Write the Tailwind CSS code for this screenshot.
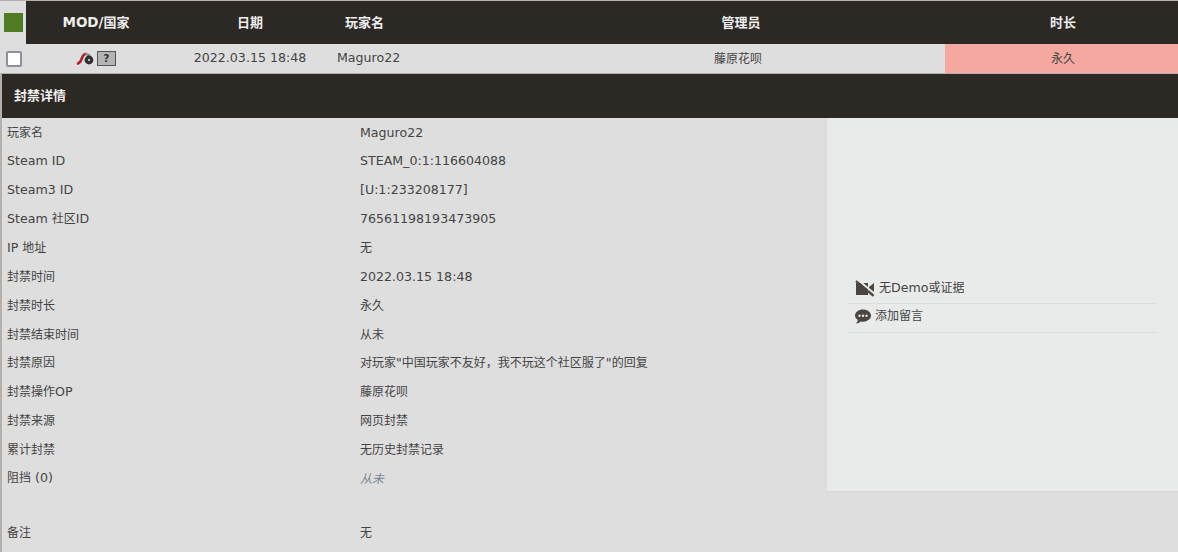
<!DOCTYPE html>
<html lang="zh">
<head>
    <meta charset="UTF-8">
    <title>封禁详情</title>
    <script src="https://cdn.jsdelivr.net/npm/@tailwindcss/browser@4"></script>
</head>
<body class="bg-[#dedede] overflow-hidden">
<div class="w-[1178px] h-[552px] overflow-hidden border-t border-[#b5b0ab] text-[12px] text-[#444] font-['DejaVu_Sans','Noto_Sans_CJK_SC',sans-serif]">
    <!-- Table header -->
    <div class="flex h-[43px] items-center font-bold text-[13px] text-[#eee]">
        <div class="w-[26px] h-full flex items-center pl-[4px] bg-[#dedede]">
            <div class="w-[19px] h-[19px] bg-[#4f7d23]"></div>
        </div>
        <div class="flex-1 h-full flex items-center bg-[#2c2824]">
            <div class="w-[140px] text-center"><span class="text-[13.5px]">MOD/</span>国家</div>
            <div class="w-[168px] text-center">日期</div>
            <div class="w-[197px] pl-[11px]">玩家名</div>
            <div class="w-[414px] pl-[6px] text-center">管理员</div>
            <div class="w-[233px] pl-[3px] text-center">时长</div>
        </div>
    </div>
    <!-- Ban row -->
    <div class="flex h-[30px] items-center border-b border-[#b5b0ab]">
        <div class="w-[26px] pl-[6px] flex items-center">
            <div class="w-[16px] h-[16px] rounded-[2px] border-2 border-[#8f8f9d] bg-white"></div>
        </div>
        <div class="w-[140px] flex items-center justify-center gap-[3px]">
            <svg width="18" height="13" viewBox="0 0 18 13">
                <path d="M1 12 C4 11 5 9 6 6 C7 3 8 2 10 2" fill="none" stroke="#b3232a" stroke-width="2.6"/>
                <path d="M9 1.5 L14 3.5" stroke="#888" stroke-width="2.4"/>
                <circle cx="13" cy="8" r="4.4" fill="#2f2f2f"/>
                <circle cx="13" cy="8" r="1.2" fill="#bbb"/>
            </svg>
            <div class="w-[19px] h-[15px] border border-[#555] bg-[#b4b4b4] flex items-center justify-center text-[10px] font-bold leading-none text-[#333]">?</div>
        </div>
        <div class="w-[168px] text-center text-[12.6px]">2022.03.15 18:48</div>
        <div class="w-[197px] pl-[3px] text-[12.6px]">Maguro22</div>
        <div class="w-[414px] text-center">藤原花呗</div>
        <div class="w-[233px] h-full pl-[3px] flex items-center justify-center bg-[#f4a89f]">永久</div>
    </div>
    <!-- Ban details -->
    <div class="ml-[2px]">
        <div class="h-[44px] flex items-center pl-[12px] bg-[#2c2824] font-bold text-[13px] text-[#eee]">封禁详情</div>
        <div class="flex items-start">
            <div class="w-[824px] pt-[0.6px]">
                <div class="flex h-[28.8px] items-center"><div class="w-[358px] pl-[5px]">玩家名</div><div class="text-[12.6px]">Maguro22</div></div>
                <div class="flex h-[28.8px] items-center"><div class="w-[358px] pl-[5px] text-[12.6px]">Steam ID</div><div class="text-[12.6px]">STEAM_0:1:116604088</div></div>
                <div class="flex h-[28.8px] items-center"><div class="w-[358px] pl-[5px] text-[12.6px]">Steam3 ID</div><div class="text-[12.6px]">[U:1:233208177]</div></div>
                <div class="flex h-[28.8px] items-center"><div class="w-[358px] pl-[5px]"><span class="text-[12.6px]">Steam </span>社区<span class="text-[12.6px]">ID</span></div><div class="text-[12.6px]">76561198193473905</div></div>
                <div class="flex h-[28.8px] items-center"><div class="w-[358px] pl-[5px]"><span class="text-[12.6px]">IP </span>地址</div><div>无</div></div>
                <div class="flex h-[28.8px] items-center"><div class="w-[358px] pl-[5px]">封禁时间</div><div class="text-[12.6px]">2022.03.15 18:48</div></div>
                <div class="flex h-[28.8px] items-center"><div class="w-[358px] pl-[5px]">封禁时长</div><div>永久</div></div>
                <div class="flex h-[28.8px] items-center"><div class="w-[358px] pl-[5px]">封禁结束时间</div><div>从未</div></div>
                <div class="flex h-[28.8px] items-center"><div class="w-[358px] pl-[5px]">封禁原因</div><div>对玩家<span class="text-[12.6px]">"</span>中国玩家不友好，我不玩这个社区服了<span class="text-[12.6px]">"</span>的回复</div></div>
                <div class="flex h-[28.8px] items-center"><div class="w-[358px] pl-[5px]">封禁操作<span class="text-[12.6px]">OP</span></div><div>藤原花呗</div></div>
                <div class="flex h-[28.8px] items-center"><div class="w-[358px] pl-[5px]">封禁来源</div><div>网页封禁</div></div>
                <div class="flex h-[28.8px] items-center"><div class="w-[358px] pl-[5px]">累计封禁</div><div>无历史封禁记录</div></div>
                <div class="flex h-[28.8px] items-center"><div class="w-[358px] pl-[5px]">阻挡<span class="text-[12.6px]"> (0)</span></div><div class="italic text-[#7b8794]">从未</div></div>
                <div class="flex h-[28.8px] items-center mt-[26px]"><div class="w-[358px] pl-[5px]">备注</div><div>无</div></div>
            </div>
            <!-- Side panel -->
            <div class="w-[352px] h-[374px] bg-[#e9ebea] border-l border-b border-[#d8d8d8] flex flex-col px-[22px] pt-[157px]">
                <div class="h-[29px] flex items-center border-b border-[#dcdcdc] pl-[6px] pb-[2px] gap-[4px]">
                    <svg width="20" height="17" viewBox="0 0 20 17">
                        <path d="M1 3 H13 V15 H1 Z M14 7 L19 3 V15 L14 11 Z" fill="#4a4541"/>
                        <path d="M3 0 L20 14" stroke="#e9ebea" stroke-width="2"/>
                        <path d="M1 1 L18.5 16" stroke="#4a4541" stroke-width="2.2"/>
                    </svg>
                    <span>无<span class="text-[12.6px]">Demo</span>或证据</span>
                </div>
                <div class="h-[29px] flex items-center border-b border-[#dcdcdc] pl-[6px] pb-[4px] gap-[4px]">
                    <svg width="16" height="15" viewBox="0 0 16 15">
                        <path d="M8 .5 C12.4 .5 16 3.2 16 6.6 C16 10 12.4 12.7 8 12.7 C7.2 12.7 6.4 12.6 5.7 12.4 C4.5 13.6 3 14.4 1 14.4 C2.1 13.3 2.8 12.2 2.9 11.1 C1.1 10 0 8.4 0 6.6 C0 3.2 3.6 .5 8 .5 Z" fill="#4a4541"/>
                        <circle cx="4.5" cy="6.7" r="1.2" fill="#e9ebea"/>
                        <circle cx="8" cy="6.7" r="1.2" fill="#e9ebea"/>
                        <circle cx="11.5" cy="6.7" r="1.2" fill="#e9ebea"/>
                    </svg>
                    <span>添加留言</span>
                </div>
            </div>
        </div>
    </div>
</div>
<div class="fixed left-0 top-[74px] bottom-0 w-[2px] bg-[#b5b0ab]"></div>
</body>
</html>
